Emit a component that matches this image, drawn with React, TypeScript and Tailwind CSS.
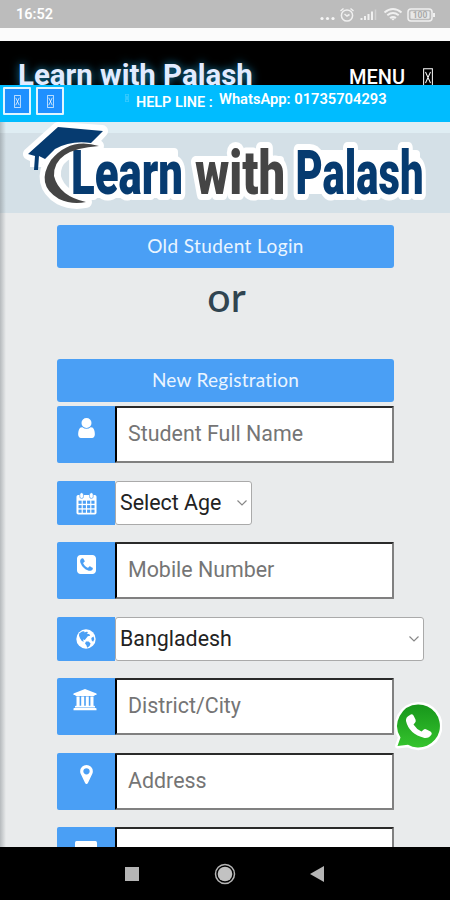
import type { ReactNode } from 'react';
import { clsx } from 'clsx';

function UserIcon() {
  return (
    <svg viewBox="0 128 1280 1536" className="h-5 w-[17px]" fill="currentColor">
      <path d="M1280 1399q0 109-62.5 187t-150.5 78h-854q-88 0-150.5-78t-62.5-187q0-85 8.5-160.5t31.5-152 58.5-131 94-89 134.5-34.5q131 128 313 128t313-128q76 0 134.5 34.5t94 89 58.5 131 31.5 152 8.5 160.5zm-256-887q0 159-112.5 271.5t-271.5 112.5-271.5-112.5-112.5-271.5 112.5-271.5 271.5-112.5 271.5 112.5 112.5 271.5z" />
    </svg>
  );
}

function CalendarIcon() {
  return (
    <svg viewBox="0 0 22 24" className="h-[23px] w-[21px]">
      <rect x="0.5" y="3" width="21" height="20.5" rx="1.8" fill="currentColor" />
      <rect x="4" y="0.7" width="3.8" height="6" rx="1.8" fill="currentColor" stroke="#4a9ff5" strokeWidth="0.7" />
      <rect x="14.2" y="0.7" width="3.8" height="6" rx="1.8" fill="currentColor" stroke="#4a9ff5" strokeWidth="0.7" />
      <g fill="#4a9ff5">
        {[9, 13.7, 18.4].map((y) =>
          [2.6, 7.1, 11.6, 16.1].map((x) => <rect key={`${x}-${y}`} x={x} y={y} width="3.3" height="3.3" />)
        )}
      </g>
    </svg>
  );
}

function PhoneIcon() {
  return (
    <svg viewBox="0 128 1536 1536" className="mt-px size-[19px]" fill="currentColor">
      <path d="M1280 1193q0-11-2-16t-18-16.5-40.5-25-47.5-26.5-45.5-25-28.5-15q-5-3-19-13t-25-15-21-5q-15 0-36.5 20.5t-39.5 45-38.5 45-33.5 20.5q-7 0-16.5-3.5t-15.5-6.5-17-9.5-14-8.5q-99-55-170-126.5t-127-170.5q-2-3-8.5-14t-9.5-17-6.5-15.5-3.5-16.5q0-13 20.5-33.5t45-38.5 45-39.5 20.5-36.5q0-10-5-21t-15-25-13-19q-3-6-15-28.5t-25-45.5-26.5-47.5-25-40.5-16.5-18-16-2q-48 0-101 22-46 21-80 94.5t-34 130.5q0 16 2.5 34t5 30.5 9 33 10 29.5 12.5 33 11 30q60 164 216.5 320.5t320.5 216.5q6 2 30 11t33 12.5 29.5 10 33 9 30.5 5 34 2.5q57 0 130.5-34t94.5-80q22-53 22-101zm256-777v960q0 119-84.5 203.5t-203.5 84.5h-960q-119 0-203.5-84.5t-84.5-203.5v-960q0-119 84.5-203.5t203.5-84.5h960q119 0 203.5 84.5t84.5 203.5z" />
    </svg>
  );
}

function GlobeIcon() {
  return (
    <svg viewBox="0 0 20 20" className="size-5">
      <circle cx="10" cy="10" r="9.7" fill="currentColor" />
      <path
        d="M3.2 4.6L6 2.6l2.2-.4.4 1.4 1.6-.8 2 .2-1.4 1.6 2.6.6.8 1.6-2.4.4-1.8 2.2-1.2 1.6-1.8-.6.8 2.4-2-.8L4.2 9.4 3 6.8z"
        fill="#4a9ff5"
      />
      <path d="M10 12.4l2.6.2 2 1.8-1 2.6-2.4 1.8-.8-2.6-1.4-1.6zM15.3 9l2.2-1.4.8 2.6-1.2 2.6-1.4-1.4z" fill="#4a9ff5" />
    </svg>
  );
}

function BankIcon() {
  return (
    <svg viewBox="0 0 24 22" className="-mt-px mr-0.5 h-[22px] w-6" fill="currentColor">
      <path d="M12 0l11.5 4.6v1.5h-1.6q0 .8-.9.8H3q-.9 0-.9-.8H.5V4.6z" />
      <path d="M3.5 7.6h3.1v9.2h1.6V7.6h3v9.2h1.6V7.6h3v9.2h1.6V7.6h3.1v9.2h.6q.9 0 .9.8v.8H2v-.8q0-.8.9-.8h.6zM1.4 19h21.2q.9 0 .9.8v1.5H.5v-1.5q0-.8.9-.8z" />
    </svg>
  );
}

function MarkerIcon() {
  return (
    <svg viewBox="0 128 1024 1536" className="h-[19px] w-[13px]" fill="currentColor">
      <path d="M768 640q0-106-75-181t-181-75-181 75-75 181 75 181 181 75 181-75 75-181zm256 0q0 109-33 179l-364 774q-16 33-47.5 52t-67.5 19-67.5-19-46.5-52l-365-774q-33-70-33-179 0-212 150-362t362-150 362 150 150 362z" />
    </svg>
  );
}

function CardIcon() {
  return (
    <svg viewBox="0 0 22 18" className="mt-0.5 h-[18px] w-[22px]" fill="currentColor">
      <rect width="22" height="18" rx="1.5" />
    </svg>
  );
}

// Box shown for a glyph the page font lacks
function MissingGlyph({ className }: { className: string }) {
  return (
    <svg viewBox="0 0 8 14" preserveAspectRatio="none" className={className} fill="none" stroke="currentColor">
      <path d="M.5.5h7v13h-7zM2 3l4 8M6 3l-4 8" strokeWidth="0.8" />
    </svg>
  );
}

function StatusBar() {
  return (
    <div className="flex h-7 shrink-0 items-center justify-between bg-[#bcbcbc] pl-4 pr-[14px] pt-0.5 text-white">
      <span className="text-[14.5px] font-semibold">16:52</span>
      <svg viewBox="0 0 117 18" className="h-[18px] w-[117px]" fill="none" stroke="#f0f0f0">
        <g fill="#f5f5f5" stroke="none">
          <circle cx="3" cy="12.5" r="1.6" />
          <circle cx="8.5" cy="12.5" r="1.6" />
          <circle cx="14" cy="12.5" r="1.6" />
        </g>
        <circle cx="28" cy="9.5" r="5.6" strokeWidth="1.5" />
        <path d="M21.5 5l3-2.5M34.5 5l-3-2.5M25.5 8l2.5 2 2.5-1.5" strokeWidth="1.5" />
        <path d="M42.5 14v-2M46 14v-4M49.5 14V8M53 14V5.5" strokeWidth="2" />
        <path d="M56.5 14V3.5" strokeWidth="1.5" opacity=".4" />
        <path d="M65.5 6.5q8.5-7 17 0M68.3 9.3q5.7-4.5 11.4 0M71 12q3-2.2 6 0" strokeWidth="2" />
        <path d="M72 12.5h4l-2 2z" fill="#f5f5f5" stroke="none" />
        <rect x="89" y="3" width="24" height="12" rx="3" strokeWidth="1.5" />
        <path d="M115 7v4" strokeWidth="2" />
        <rect x="91.5" y="5.2" width="19" height="7.6" rx="1" fill="#e8e8e8" stroke="none" />
        <text x="101" y="12" textAnchor="middle" fontSize="8.5" fontWeight="700" fill="#aaa" stroke="none">
          100
        </text>
      </svg>
    </div>
  );
}

const logoWords = [
  { text: 'Learn', x: 71, width: 112, color: '#063b70' },
  { text: 'with', x: 195, width: 90, color: '#454545' },
  { text: 'Palash', x: 295.5, width: 128, color: '#063b70' },
];

function Logo() {
  return (
    <svg viewBox="0 0 450 91" className="block h-[91px] w-full">
      <g stroke="#fff" strokeWidth="12" strokeLinejoin="round" fill="#fff">
        <path d="M29 32l29-26 44 3-9 10-17 1-23 11-14 6zM36 34v11" />
        <path d="M98 24Q70 16 52 36Q36 62 60 77Q72 83 86 80Q60 74 55 55Q52 28 98 24z" />
        <path d="M76 30h98v42H76zM202 38h78v30h-78zM302 32h114v36H302z" strokeWidth="8" />
      </g>
      {logoWords.map((word) => (
        <text
          key={word.text}
          x={word.x}
          y="72"
          textLength={word.width}
          lengthAdjust="spacingAndGlyphs"
          className="text-[62px] font-black"
          fill={word.color}
          stroke="#fff"
          strokeWidth="12"
          strokeLinejoin="round"
          paintOrder="stroke"
        >
          {word.text}
        </text>
      ))}
      <path d="M28 32l30-27 45 4-10 10-2 2q-20-3-36 6l-10 10-6-3-1 14h-4l1-14z" fill="#063b70" />
      <path d="M99 24Q70 15 51 38Q35 63 59 77Q72 83 86 80Q59 74 54 54Q53 27 99 24z" fill="#454545" />
    </svg>
  );
}

interface FieldProps {
  icon: ReactNode;
  label: string;
  className?: string;
}

function TextField({ icon, label, className }: FieldProps) {
  return (
    <div className={clsx('flex h-[57px] w-[337px]', className)}>
      <div className="flex w-[58px] shrink-0 items-start justify-center rounded-l-[2px] bg-[#4a9ff5] pt-3 text-white">
        {icon}
      </div>
      <div className="flex flex-1 items-center rounded-[1px] border-2 border-t-[#2a2a2a] border-r-[#808080] border-b-[#808080] border-l-black bg-white pl-[11px] text-[21.4px] text-[#757575]">
        {label}
      </div>
    </div>
  );
}

function SelectField({ icon, label, className }: FieldProps) {
  return (
    <div className={clsx('flex h-[44px]', className)}>
      <div className="flex w-[58px] shrink-0 items-center justify-center rounded-l-[2px] bg-[#4a9ff5] text-white">
        {icon}
      </div>
      <div className="flex flex-1 items-center justify-between rounded-[3px] border border-[#aaa] bg-white pl-1 pr-1 text-[21.4px] text-[#222]">
        {label}
        <svg viewBox="0 0 10 6" className="h-[6px] w-[10px]" fill="none" stroke="#888" strokeWidth="1.2">
          <path d="M.5.5L5 5 9.5.5" />
        </svg>
      </div>
    </div>
  );
}

function WhatsAppBubble() {
  return (
    <svg viewBox="0 0 50 52" className="absolute left-[392px] top-[700px] h-[52px] w-[50px]">
      <defs>
        <linearGradient id="bubble" x1="0" y1="0" x2="0" y2="1">
          <stop offset="0" stopColor="#17961b" />
          <stop offset="1" stopColor="#35c42d" />
        </linearGradient>
      </defs>
      <path
        d="M26 4.5a21.5 21.5 0 1 1-10 40.3L5.5 46l3-8.5A21.5 21.5 0 0 1 26 4.5z"
        fill="url(#bubble)"
        stroke="#fff"
        strokeWidth="5"
        strokeLinejoin="round"
        paintOrder="stroke"
      />
      <path
        d="M18 15q2-1.5 3.5.5l2 4q.8 2-.5 3.3l-1.5 1.7q3 4.8 8 7l2-1.8q1.3-1.2 3-.3l4 2q2 1.3 1 3.1-2.5 4-7 3.5Q17 34 14 21q-.5-4 4-6z"
        fill="#fff"
      />
    </svg>
  );
}

export default function App() {
  return (
    <div className="relative flex h-[900px] w-[450px] flex-col overflow-hidden bg-[#e9ebec] font-[Roboto,sans-serif]">
      <StatusBar />
      <div className="h-[13px] shrink-0 bg-[#fbfbfb]" />

      {/* Site header */}
      <header className="flex h-11 shrink-0 items-start justify-between overflow-hidden bg-black pl-[18px] pr-[17px] text-white">
        <h1 className="pt-[17px] text-[29.4px] font-bold leading-[34px] text-[#e2ebff] [text-shadow:0_0_9px_#1687b5]">
          Learn with Palash
        </h1>
        <div className="flex items-start gap-[18px] pt-6">
          <span className="text-[20px] font-medium leading-6">MENU</span>
          <MissingGlyph className="mt-[3px] h-[19px] w-[10px]" />
        </div>
      </header>

      {/* Help line */}
      <div className="flex h-[37px] shrink-0 items-start bg-[#00bcff] pl-[3px] pt-[2px] text-white">
        <div className="flex gap-[5px]">
          <span className="flex size-[28px] items-center justify-center rounded-[1px] border-2 border-[#dff5ff] bg-[#1e90ff]">
            <MissingGlyph className="h-[13px] w-[7px]" />
          </span>
          <span className="flex size-[28px] items-center justify-center rounded-[1px] border-2 border-[#dff5ff] bg-[#1e90ff]">
            <MissingGlyph className="h-[13px] w-[7px]" />
          </span>
        </div>
        <MissingGlyph className="ml-[61px] mt-[7px] h-2 w-1 opacity-50" />
        <span className="ml-[7px] mt-[6px] w-[83px] whitespace-nowrap text-[14.4px] font-semibold leading-[20px]">
          HELP LINE :
        </span>
        <span className="mt-[2px] whitespace-nowrap text-[14.7px] font-semibold leading-[20px]">
          WhatsApp: 01735704293
        </span>
      </div>

      <main className="flex min-h-0 flex-1 flex-col overflow-hidden bg-[linear-gradient(to_right,#b6babd,#e9ebec_6px)]">
        <div className="shrink-0 bg-[linear-gradient(to_right,#00000033,#00000000_6px),linear-gradient(to_bottom,#dfedf3_11px,#d4e0e7_11px)]">
          <Logo />
        </div>
        <div className="flex flex-col pl-[57px] pt-3">
          <button className="h-[43px] w-[337px] rounded-[3px] bg-[#4a9ff5] font-[Lato,sans-serif] text-[19px] tracking-[0.4px] text-[#eaf5ff]">
            Old Student Login
          </button>
          <p className="h-[91px] w-[337px] pt-[5px] pl-[2px] text-center font-[Lato,sans-serif] text-[41px] font-medium leading-[48px] text-[#304450]">
            or
          </p>
          <button className="h-[43px] w-[337px] rounded-[3px] bg-[#4a9ff5] font-[Lato,sans-serif] text-[19px] tracking-[0.25px] text-[#eaf5ff]">
            New Registration
          </button>
          <TextField icon={<UserIcon />} label="Student Full Name" className="mt-1" />
          <SelectField icon={<CalendarIcon />} label="Select Age" className="mt-[18px] w-[195px]" />
          <TextField icon={<PhoneIcon />} label="Mobile Number" className="mt-[17px]" />
          <SelectField icon={<GlobeIcon />} label="Bangladesh" className="mt-[18px] w-[367px]" />
          <TextField icon={<BankIcon />} label="District/City" className="mt-[17px]" />
          <TextField icon={<MarkerIcon />} label="Address" className="mt-[18px]" />
          <TextField icon={<CardIcon />} label="" className="mt-[17px]" />
        </div>
      </main>

      <WhatsAppBubble />

      {/* Android navigation */}
      <nav className="flex h-[53px] shrink-0 items-center bg-black pl-[125px]">
        <span className="size-[14px] bg-[#b5b5b5]" />
        <svg viewBox="0 0 22 22" className="ml-[75px] size-[22px]">
          <circle cx="11" cy="11" r="9.5" fill="none" stroke="#b5b5b5" strokeWidth="1.5" />
          <circle cx="11" cy="11" r="7.3" fill="#c2c2c2" />
        </svg>
        <svg viewBox="0 0 14 16" className="ml-[74px] h-4 w-[14px]" fill="#b5b5b5">
          <path d="M14 0v16L0 8z" />
        </svg>
      </nav>
    </div>
  );
}
